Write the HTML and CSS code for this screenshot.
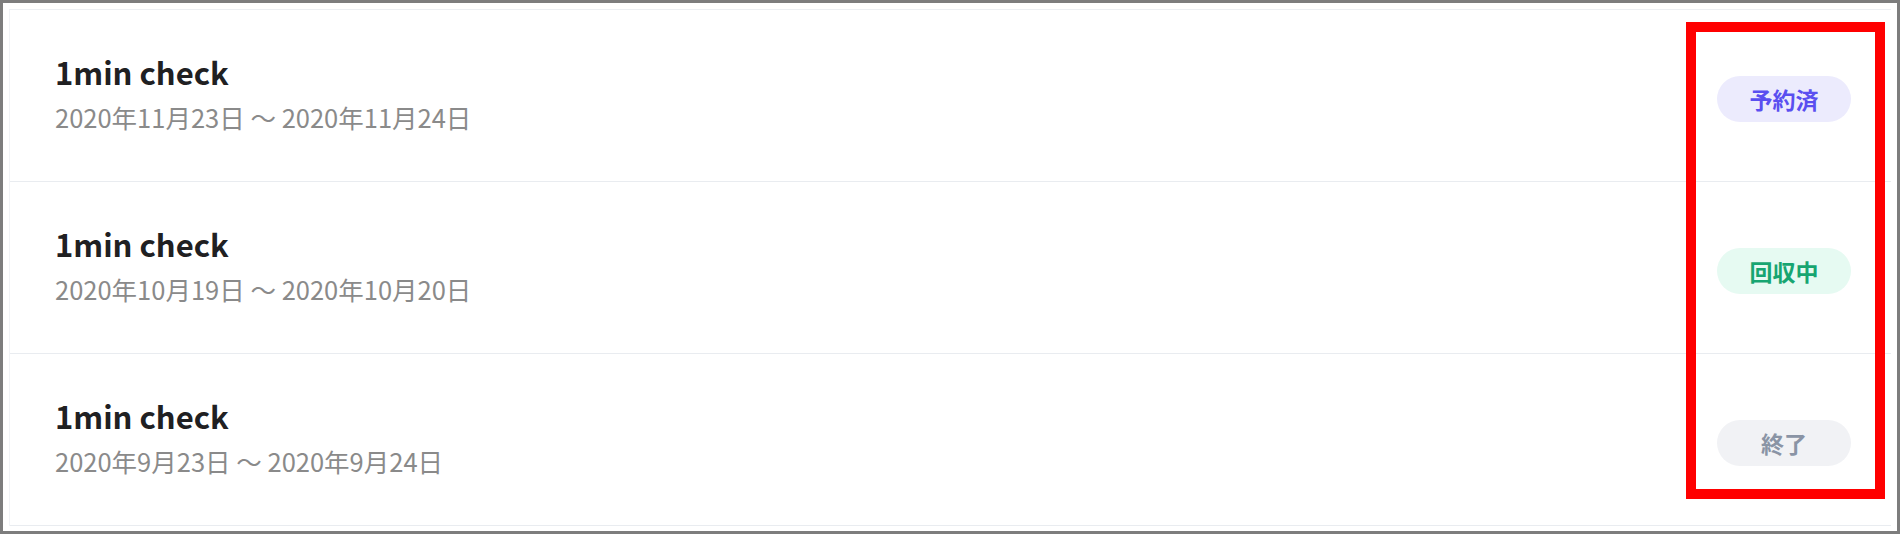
FILE: index.html
```html
<!DOCTYPE html>
<html lang="ja">
<head>
<meta charset="utf-8">
<link rel="stylesheet" href="styles.css">
</head>
<body>
<div class="frame">
  <ul class="list">
    <li class="row">
      <div class="info">
        <div class="title">1min check</div>
        <div class="date">2020年11月23日 〜 2020年11月24日</div>
      </div>
      <span class="badge badge-reserved">予約済</span>
    </li>
    <li class="row">
      <div class="info">
        <div class="title">1min check</div>
        <div class="date">2020年10月19日 〜 2020年10月20日</div>
      </div>
      <span class="badge badge-collecting">回収中</span>
    </li>
    <li class="row">
      <div class="info">
        <div class="title">1min check</div>
        <div class="date">2020年9月23日 〜 2020年9月24日</div>
      </div>
      <span class="badge badge-done">終了</span>
    </li>
  </ul>
  <div class="highlight"></div>
</div>
</body>
</html>
```
FILE: styles.css
```css
* { box-sizing: border-box; }
html, body { margin: 0; padding: 0; background: #ffffff; }
body {
  font-family: "Noto Sans CJK JP", "Noto Sans", sans-serif;
}
.frame {
  position: relative;
  width: 1900px;
  border: 3px solid #7d7d7d;
  padding: 6px 6px 5px 6px;
  background: #ffffff;
}
.list {
  list-style: none;
  margin: 0;
  padding: 0;
  border-top: 1px solid #eceff3;
  border-left: 1px solid #f1f3f6;
}
.row {
  height: 172px;
  border-bottom: 1px solid #e9ecf0;
  display: flex;
  align-items: center;
  justify-content: space-between;
  padding: 0 40px 0 45px;
}
.info {
  display: flex;
  flex-direction: column;
  gap: 8px;
  padding-bottom: 6px;
}
.title {
  font-size: 31px;
  font-weight: 700;
  color: #202022;
  line-height: 40px;
}
.date {
  font-size: 25.5px;
  color: #8a8a8a;
  line-height: 34px;
}
.badge {
  display: inline-flex;
  align-items: center;
  justify-content: center;
  width: 134px;
  height: 46px;
  border-radius: 23px;
  font-size: 23px;
  font-weight: 700;
  margin-top: 6px;
}
.badge-reserved { background: #ecebfd; color: #5a4ff0; }
.badge-collecting { background: #e6faf2; color: #17a571; }
.badge-done { background: #f1f2f5; color: #8a94a5; }
.highlight {
  position: absolute;
  left: 1683px;
  top: 19px;
  width: 199px;
  height: 477px;
  border: 10px solid #ff0000;
}
```
